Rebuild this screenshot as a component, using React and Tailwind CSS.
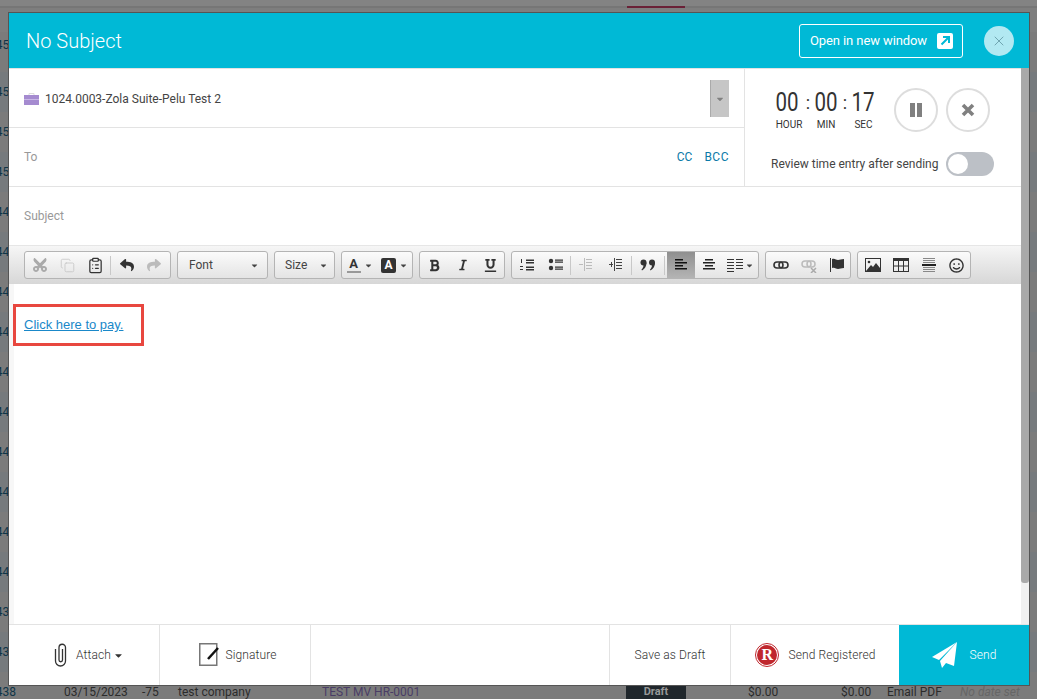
import React from 'react';
import { FaCut, FaReply, FaShare, FaBold, FaItalic, FaUnderline, FaRegSmile, FaCaretDown } from 'react-icons/fa';
import { LuCopy, LuClipboardList, LuX } from 'react-icons/lu';

const rows = ['4450', '4459', '4458', '4457', '4449', '4448', '4447', '4446', '4445', '4444', '4443', '4442', '4441', '4440', '4439', '4430', '4380'];

const Lines = ({ items, color = '#333' }) => (
    <svg width="16" height="16" viewBox="0 0 16 16">
        {items.map((l, i) => (
            <rect key={i} x={l[0]} y={l[1]} width={l[2]} height={l[3] || 1.5} fill={color} />
        ))}
    </svg>
);

const Btn = ({ className = 'w-7', children }) => (
    <div className={`flex h-[26px] shrink-0 items-center justify-center text-[#333] ${className}`}>{children}</div>
);

const Sep = () => <div className="h-[19px] w-px shrink-0 bg-[#c8c8c8]"></div>;

const Group = ({ className = '', children }) => (
    <div className={`flex h-7 shrink-0 items-center rounded-[3px] border border-[#b4b4b4] bg-gradient-to-b from-[#fbfbfb] to-[#e4e4e4] ${className}`}>
        {children}
    </div>
);

const Caret = () => <FaCaretDown className="text-[9px] text-[#444]" />;

const Toolbar = () => (
    <div className="flex h-[39px] items-start gap-[6px] border-t border-[#e6e6e6] bg-gradient-to-b from-[#f6f6f6] to-[#d7d7d7] pl-[15px] pt-[5px]">
        <Group className="w-[147px]">
            <Btn className="w-[30px] text-[#aaa]"><FaCut className="text-[16px] -rotate-90" /></Btn>
            <Btn className="w-[25px] text-[#c4c4c4]"><LuCopy size={15} strokeWidth={1.25} /></Btn>
            <Btn className="w-[30px]"><LuClipboardList size={17} strokeWidth={1.75} /></Btn>
            <Sep />
            <Btn className="w-[32px]"><FaReply className="text-[14px]" /></Btn>
            <Btn className="w-[22px] text-[#bbb]"><FaShare className="text-[14px]" /></Btn>
        </Group>
        <Group className="w-[91px] justify-between pl-[11px] pr-2 text-[12px] text-[#444]">
            <span>Font</span>
            <Caret />
        </Group>
        <Group className="w-[61px] justify-between pl-[10px] pr-[6px] text-[12px] text-[#444]">
            <span>Size</span>
            <Caret />
        </Group>
        <Group className="w-[72px]">
            <Btn className="w-[35px] gap-[3px]">
                <span className="flex flex-col items-center text-[13px] font-bold leading-[13px] text-[#333]">
                    <span>A</span>
                    <span className="mt-[1px] h-[2px] w-[14px] bg-[#999]"></span>
                </span>
                <Caret />
            </Btn>
            <Btn className="w-[35px] gap-[3px]">
                <span className="flex h-[15px] w-[15px] items-center justify-center rounded-[2px] bg-[#333] text-[12px] font-bold text-white">A</span>
                <Caret />
            </Btn>
        </Group>
        <Group className="w-[86px]">
            <Btn className="w-[29px]"><FaBold className="text-[13px]" /></Btn>
            <Btn className="w-[27px]"><FaItalic className="text-[12px]" /></Btn>
            <Btn className="w-[28px]"><FaUnderline className="text-[13px]" /></Btn>
        </Group>
        <Group className="w-[248px]">
            <Btn className="w-[29px]">
                <Lines items={[[2, 2, 1, 4], [7, 2.5, 8], [7, 5, 8], [1, 9, 3, 1], [1, 12, 3, 1], [7, 9.5, 8], [7, 12, 8]]} />
            </Btn>
            <Btn className="w-[29px]">
                <svg width="16" height="16" viewBox="0 0 16 16">
                    <circle cx="3" cy="4" r="2.2" fill="#333" />
                    <circle cx="3" cy="11" r="2.2" fill="#333" />
                    <path d="M7 3.2 H15 M7 5.2 H15 M7 10.2 H15 M7 12.2 H15" stroke="#333" strokeWidth="1.2" />
                </svg>
            </Btn>
            <Sep />
            <Btn className="w-[30px]">
                <Lines color="#bbb" items={[[8, 2, 6, 1], [8, 5, 6, 1], [8, 8, 6, 1], [8, 11, 6, 1], [6, 1, 1, 13], [1, 7, 4, 1]]} />
            </Btn>
            <Btn className="w-[30px]">
                <Lines color="#444" items={[[8, 2, 6, 1], [8, 5, 6, 1], [8, 8, 6, 1], [8, 11, 6, 1], [6, 1, 1, 13], [1, 7, 4, 1], [3, 5, 1, 5]]} />
            </Btn>
            <Sep />
            <Btn className="w-[32px]">
                <svg width="16" height="12" viewBox="0 0 16 12">
                    <circle cx="3.5" cy="3.5" r="3" fill="#333" />
                    <path d="M6.5 3.5 C6.5 7 5 10 2 11.5 L1.5 10.5 C3 9 3.5 7.5 3.5 6 Z" fill="#333" />
                    <circle cx="12" cy="3.5" r="3" fill="#333" />
                    <path d="M15 3.5 C15 7 13.5 10 10.5 11.5 L10 10.5 C11.5 9 12 7.5 12 6 Z" fill="#333" />
                </svg>
            </Btn>
            <Sep />
            <div className="ml-[2px] flex h-[26px] w-7 shrink-0 items-center justify-center bg-gradient-to-b from-[#8f8f8f] to-[#b4b4b4]">
                <Lines color="#111" items={[[2, 2, 8], [2, 5, 12], [2, 8, 8], [2, 11, 12]]} />
            </div>
            <Btn className="w-[28px]">
                <Lines color="#222" items={[[4, 2, 8], [2, 5, 12], [4, 8, 8], [2, 11, 12]]} />
            </Btn>
            <Btn className="w-[35px] gap-[2px]">
                <Lines items={[[0, 2, 7, 1], [0, 5, 7, 1], [0, 8, 7, 1], [0, 11, 7, 1], [0, 14, 7, 1], [9, 2, 7, 1], [9, 5, 7, 1], [9, 8, 7, 1], [9, 11, 7, 1]]} />
                <Caret />
            </Btn>
        </Group>
        <Group className="w-[86px]">
            <Btn className="w-[29px]">
                <svg width="16" height="16" viewBox="0 0 16 16">
                    <rect x="1" y="5" width="9" height="6" rx="3" fill="none" stroke="#333" strokeWidth="1.6" />
                    <rect x="6" y="5" width="9" height="6" rx="3" fill="none" stroke="#333" strokeWidth="1.6" />
                </svg>
            </Btn>
            <Btn className="w-[28px]">
                <svg width="16" height="16" viewBox="0 0 16 16">
                    <rect x="1" y="4" width="9" height="6" rx="3" fill="none" stroke="#bbb" strokeWidth="1.5" />
                    <rect x="6" y="4" width="8" height="6" rx="3" fill="none" stroke="#bbb" strokeWidth="1.5" />
                    <path d="M10 11 L15 16 M15 11 L10 16" stroke="#aaa" strokeWidth="1.5" />
                </svg>
            </Btn>
            <Btn className="w-[27px]">
                <svg width="16" height="16" viewBox="0 0 16 16">
                    <rect x="1" y="1" width="1" height="14" fill="#333" />
                    <path d="M3 2 C6 1 7 3 9 3 C11 3 12 2 15 2 V11 C12 11 11 12 9 12 C7 12 6 10 3 11 Z" fill="#333" />
                </svg>
            </Btn>
        </Group>
        <Group className="w-[114px]">
            <Btn className="w-[29px]">
                <svg width="16" height="14" viewBox="0 0 16 14">
                    <rect x="0.5" y="0.5" width="15" height="13" fill="none" stroke="#333" />
                    <circle cx="4" cy="4" r="1.3" fill="#333" />
                    <path d="M1 13 L6 7 L8 9 L11 5 L15 10 V13 Z" fill="#333" />
                </svg>
            </Btn>
            <Btn className="w-[28px]">
                <svg width="16" height="14" viewBox="0 0 16 14">
                    <rect x="0.5" y="0.5" width="15" height="13" fill="none" stroke="#333" />
                    <rect x="0" y="0" width="16" height="3" fill="#333" />
                    <path d="M0 8 H16 M5.5 3 V14 M10.5 3 V14" stroke="#333" />
                </svg>
            </Btn>
            <Btn className="w-[28px]">
                <svg width="16" height="16" viewBox="0 0 16 16">
                    <path d="M2 1.5 H14 M2 3.5 H14 M2 5.5 H14 M2 10.5 H14 M2 12.5 H14 M2 14.5 H14" stroke="#888" />
                    <rect x="1" y="7" width="14" height="2" fill="#222" />
                </svg>
            </Btn>
            <Btn className="w-[27px]"><FaRegSmile className="text-[15px]" /></Btn>
        </Group>
    </div>
);

const Digits = ({ className, valueClass = '', value, label }) => (
    <div className={`flex flex-col items-center ${className}`}>
        <span className={`inline-block scale-x-[0.82] text-[25px] leading-[30px] ${valueClass}`}>{value}</span>
        <span className="mt-[1px] text-[10px] leading-3">{label}</span>
    </div>
);

const App = () => {
    return (
        <div className="relative h-[699px] w-[1037px] overflow-hidden bg-[#7e7e7e] font-['Roboto',sans-serif]">
            {/* page behind the dialog */}
            <div className="h-[6px] bg-[#838383]"></div>
            <div className="flex h-[26px] items-start border-t-2 border-[#767676] pl-[627px]">
                <div className="-mt-[2px] h-[2px] w-[58px] bg-[#6a2036]"></div>
            </div>
            {rows.map((n, i) => (
                <div key={n} className={`flex h-10 items-center text-[12px] text-[#2b2b2b] ${i % 2 ? 'bg-[#767a7d]' : 'bg-[#7b7b7b]'} ${i === 0 ? 'pb-[14px]' : ''}`}>
                    <div className="flex w-4 shrink-0 justify-end">
                        <span className="shrink-0 text-[#0f3548]">{i === 16 ? '438' : n}</span>
                    </div>
                    {i === 16 && (
                        <div className="flex items-center">
                            <span className="ml-12 w-[78px]">03/15/2023</span>
                            <span className="w-9">-75</span>
                            <span className="w-[144px]">test company</span>
                            <span className="w-[304px] text-[#4a3d66]">TEST MV HR-0001</span>
                            <span className="flex h-10 w-[60px] items-center justify-center bg-[#20272c] text-[11px] font-bold text-[#999]">Draft</span>
                            <span className="ml-[62px] w-[93px]">$0.00</span>
                            <span className="w-[46px]">$0.00</span>
                            <span className="w-[73px]">Email PDF</span>
                            <span className="italic text-[#666]">No date set</span>
                        </div>
                    )}
                </div>
            ))}

            {/* dialog */}
            <div className="absolute left-[8px] top-[12px] flex h-[674px] w-[1022px] flex-col border border-[#555] bg-white">
                <div className="flex h-[55px] shrink-0 items-center bg-[#00b9d6] pl-[17px] pr-[15px]">
                    <h1 className="text-[20px] font-light text-white">No Subject</h1>
                    <div className="ml-auto flex h-[34px] w-[164px] items-center rounded-[3px] border border-white pl-[10px] text-[13px] tracking-[-0.1px] text-white">
                        Open in new window
                        <span className="ml-[10px] flex h-4 w-4 items-center justify-center rounded-[2px] bg-white">
                            <svg width="12" height="12" viewBox="0 0 12 12">
                                <path d="M2.5 9.5 L9 3 M4 2 H10 V8" fill="none" stroke="#00b9d6" strokeWidth="2" />
                            </svg>
                        </span>
                    </div>
                    <div className="ml-[21px] flex h-[30px] w-[30px] items-center justify-center rounded-full bg-[#b2e9f2] text-[#4f8490]">
                        <LuX size={16} strokeWidth={1} />
                    </div>
                </div>

                <div className="flex min-h-0 flex-1">
                    <div className="flex min-w-0 flex-1 flex-col border-t border-[#e3e3e3]">
                        <div className="flex h-[118px] shrink-0 border-b border-[#e3e3e3]">
                            <div className="flex w-[736px] shrink-0 flex-col border-r border-[#e3e3e3]">
                                <div className="flex h-[59px] items-center border-b border-[#e3e3e3] pl-[15px] pr-[15px] pt-[1px]">
                                    <svg width="15" height="12" viewBox="0 0 15 12" className="shrink-0">
                                        <path d="M5 2 V0.5 H10 V2" fill="none" stroke="#ddd" />
                                        <rect x="0" y="2" width="15" height="10" fill="#a58bd0" />
                                        <rect x="0" y="6" width="15" height="1" fill="#c9b8e6" />
                                    </svg>
                                    <span className="ml-[6px] text-[12px] text-[#444]">1024.0003-Zola Suite-Pelu Test 2</span>
                                    <div className="ml-auto flex h-[37px] w-[19px] items-center justify-center border-l border-[#aaa] bg-[#c6c6c6]">
                                        <FaCaretDown className="text-[10px] text-[#808080]" />
                                    </div>
                                </div>
                                <div className="flex flex-1 items-center pl-[15px] pr-[15px] text-[12px]">
                                    <span className="text-[#999]">To</span>
                                    <span className="ml-auto text-[#0b7aa8]">CC</span>
                                    <span className="ml-3 tracking-[0.5px] text-[#0b7aa8]">BCC</span>
                                </div>
                            </div>
                            <div className="flex flex-1 flex-col pl-[26px]">
                                <div className="ml-[5px] flex items-start pt-[19px]">
                                    <div className="flex items-start text-[#333]">
                                        <Digits className="w-[26px]" valueClass="-ml-[3px]" value="00" label="HOUR" />
                                        <span className="w-3 text-center text-[18px] leading-[30px]">:</span>
                                        <Digits className="w-6" value="00" label="MIN" />
                                        <span className="w-[14px] text-center text-[18px] leading-[30px]">:</span>
                                        <Digits className="w-[23px]" value="17" label="SEC" />
                                    </div>
                                    <div className="ml-[19px] flex h-11 w-11 items-center justify-center rounded-full border-2 border-[#ddd]">
                                        <span className="h-[14px] w-[5px] bg-[#808080]"></span>
                                        <span className="ml-[2px] h-[14px] w-[5px] bg-[#808080]"></span>
                                    </div>
                                    <div className="ml-2 flex h-11 w-11 items-center justify-center rounded-full border-2 border-[#ddd]">
                                        <svg width="14" height="14" viewBox="0 0 14 14">
                                            <path d="M2 2 L12 12 M12 2 L2 12" stroke="#808080" strokeWidth="3.6" />
                                        </svg>
                                    </div>
                                </div>
                                <div className="mt-[20px] flex items-center">
                                    <span className="text-[12px] text-[#444]">Review time entry after sending</span>
                                    <div className="ml-2 flex h-6 w-12 items-center rounded-full bg-[#bcc0c6] pl-[2px]">
                                        <div className="h-5 w-5 rounded-full bg-white"></div>
                                    </div>
                                </div>
                            </div>
                        </div>
                        <div className="flex h-[58px] shrink-0 items-center pl-[15px] text-[12px] text-[#999]">Subject</div>
                        <Toolbar />
                        <div className="flex-1 border-l-[5px] border-[#f7f7f7] pt-[20px]">
                            <div className="-ml-[1px] flex h-[42px] w-[131px] items-center border-[3px] border-[#e8473f] pl-2">
                                <a href="#pay" className="font-['Liberation_Sans',sans-serif] text-[13px] text-[#1a88c9] underline">Click here to pay.</a>
                            </div>
                        </div>
                    </div>
                    <div className="w-2 shrink-0 bg-[#f0f0f0]">
                        <div className="h-[515px] rounded-b-[3px] bg-[#a9a9a9]"></div>
                    </div>
                </div>

                <div className="flex h-[61px] shrink-0 border-t border-[#e3e3e3] text-[12px] font-light tracking-[0.1px] text-[#333]">
                    <div className="flex w-[151px] items-center justify-center gap-[9px] border-r border-[#e3e3e3] pl-[10px]">
                        <svg width="13" height="24" viewBox="0 0 13 24">
                            <path d="M1.5 6 V18 A5 5 0 0 0 11.5 18 V4.5 A3.25 3.25 0 0 0 5 4.5 V17 A1.75 1.75 0 0 0 8.5 17 V6" fill="none" stroke="#333" strokeWidth="1.3" />
                        </svg>
                        <span className="flex items-center gap-[2px]">Attach <FaCaretDown className="text-[11px] text-[#333]" /></span>
                    </div>
                    <div className="flex w-[151px] items-center justify-center gap-[7px] border-r border-[#e3e3e3] pl-[4px]">
                        <svg width="21" height="24" viewBox="0 0 21 24">
                            <rect x="1.75" y="0.75" width="17" height="21.5" fill="none" stroke="#777" strokeWidth="1.5" />
                            <path d="M10 16 L20 5" stroke="#111" strokeWidth="2.5" />
                        </svg>
                        <span>Signature</span>
                    </div>
                    <div className="flex-1"></div>
                    <div className="flex w-[121px] items-center justify-center border-l border-[#e3e3e3]">Save as Draft</div>
                    <div className="flex w-[169px] items-center justify-center gap-[9px] border-l border-[#e3e3e3] pl-[1px]">
                        <div className="flex h-6 w-6 items-center justify-center rounded-full border border-[#c0272d]">
                            <div className="flex h-5 w-5 items-center justify-center rounded-full bg-[#c0272d]">
                                <span className="font-['Liberation_Serif',serif] text-[16px] font-bold leading-none text-white">R</span>
                            </div>
                        </div>
                        <span>Send Registered</span>
                    </div>
                    <div className="flex w-[130px] items-center justify-center gap-[13px] bg-[#00b9d6] text-white">
                        <svg width="25" height="26" viewBox="0 0 25 26">
                            <path d="M25 0 L0 15 L7 18 Z" fill="#fff" />
                            <path d="M25 0 L8 19 L10 26 L14 21 L22 24 Z" fill="#fff" />
                        </svg>
                        <span>Send</span>
                    </div>
                </div>
            </div>
        </div>
    );
};

export default App;
